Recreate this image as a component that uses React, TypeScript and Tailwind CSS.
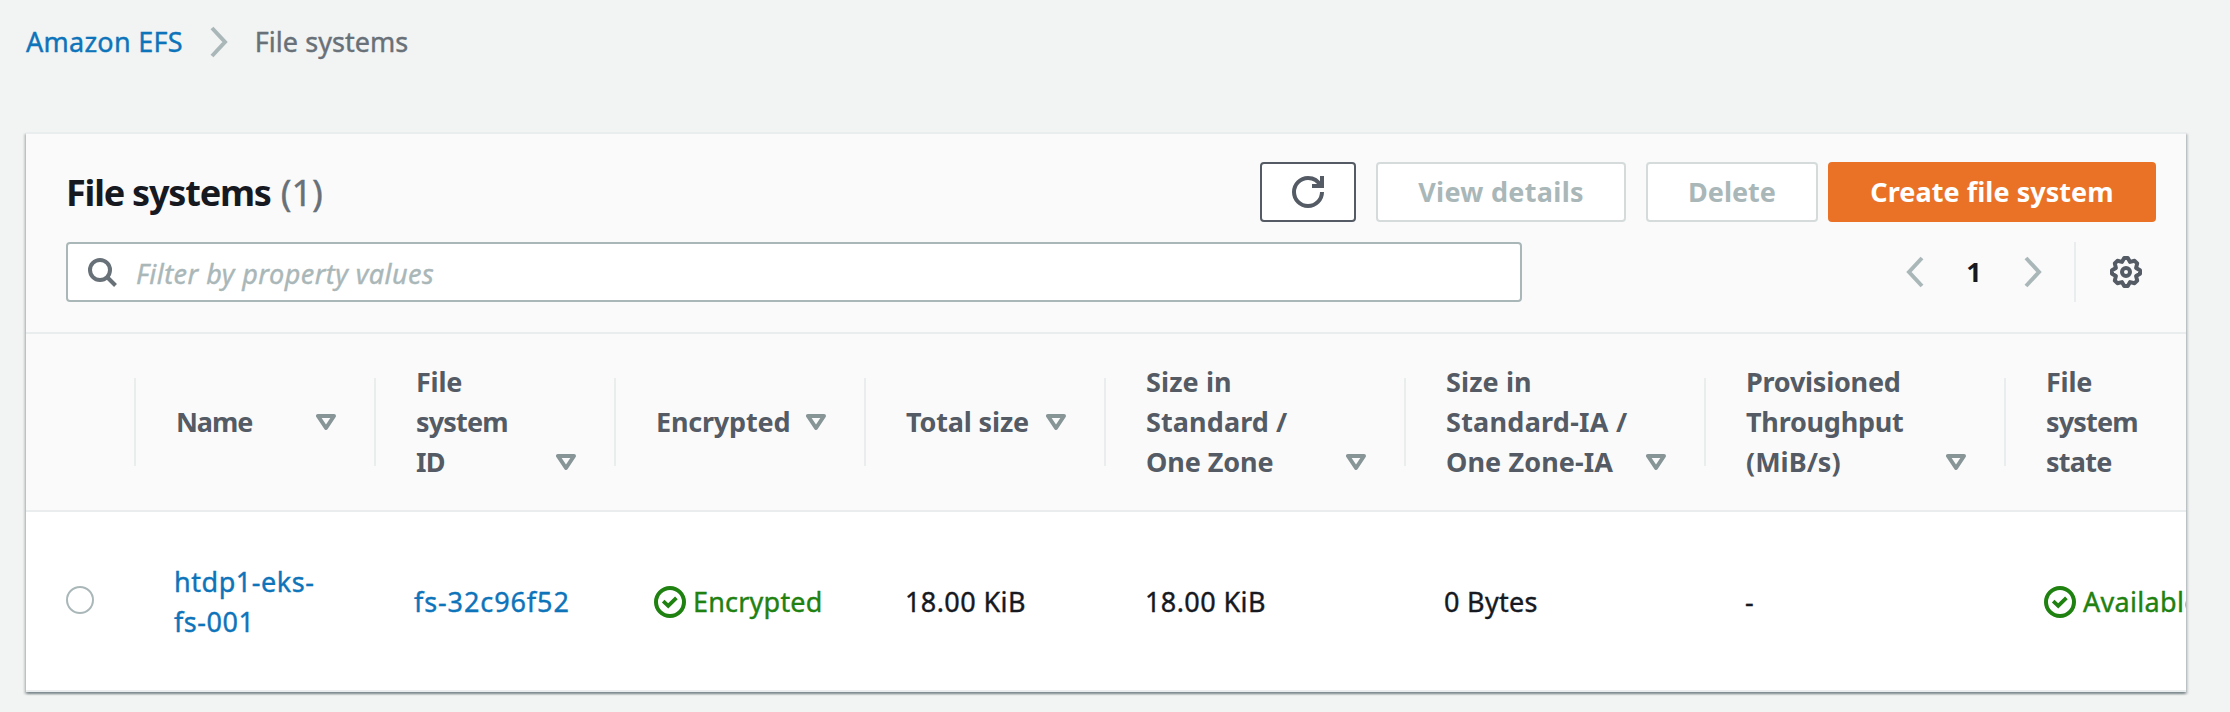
import type { ReactNode } from "react";

function SortIcon() {
  return (
    <svg className="h-5 w-5 shrink-0" viewBox="0 0 20 20" fill="none" stroke="#879596" strokeWidth="4" strokeLinejoin="round">
      <path d="M2 4h16l-8 12z" />
    </svg>
  );
}

function CheckIcon() {
  return (
    <svg className="h-8 w-8 shrink-0" viewBox="0 0 16 16" fill="none" stroke="#1f8110" strokeWidth="2">
      <circle cx="8" cy="8" r="7" />
      <path d="M4.6 7.6l2.5 2.3 4.1-4" strokeWidth="1.9" />
    </svg>
  );
}

function RefreshIcon() {
  return (
    <svg className="h-8 w-8" viewBox="0 0 16 16" fill="none" stroke="#545b64" strokeWidth="2">
      <path d="M15 8c0 3.87-3.13 7-7 7s-7-3.13-7-7 3.13-7 7-7c2.79 0 5.2 1.63 6.33 4" />
      <path d="M10 5h5V0" />
    </svg>
  );
}

function SearchIcon() {
  return (
    <svg className="h-8 w-8 shrink-0" viewBox="0 0 32 32" fill="none" stroke="#687078" strokeWidth="4">
      <circle cx="14" cy="14" r="10" />
      <path d="M21 21l8.5 8.5" />
    </svg>
  );
}

function Chevron({ left, className }: { left?: boolean; className?: string }) {
  return (
    <svg className={className} viewBox="0 0 20 32" fill="none" stroke="#aab7b8" strokeWidth="4">
      <path d={left ? "M17 2L4 16l13 14" : "M3 2l13 14L3 30"} />
    </svg>
  );
}

function GearIcon() {
  return (
    <svg className="h-8 w-8" viewBox="0 0 16 16" fill="none" stroke="#545b64" strokeWidth="2" strokeLinejoin="round">
      <path d="M7.1 1h1.8l1.14 1.95L12.3 2.4l1.3 1.3-.55 2.26L15 7.1v1.8l-1.95 1.14.55 2.26-1.3 1.3-2.26-.55L8.9 15H7.1l-1.14-1.95-2.26.55-1.3-1.3.55-2.26L1 8.9V7.1l1.95-1.14L2.4 3.7l1.3-1.3 2.26.55z" />
      <circle cx="8" cy="8" r="2" />
    </svg>
  );
}

function HeaderCell({ width, lines, last }: { width: string; lines: { text: string; tracking: string }[]; last?: boolean }) {
  return (
    <div className={`flex shrink-0 items-center ${width}`}>
      <div className="h-[88px] w-0.5 shrink-0 bg-[#eaeded]" />
      <div className="flex grow items-end justify-between pl-10 pr-[38px]">
        <div className="whitespace-nowrap font-bold text-[#545b64] [-webkit-text-stroke:0]">
          {lines.map((line) => (
            <div key={line.text} className={line.tracking}>{line.text}</div>
          ))}
        </div>
        {!last && (
          <div className="flex h-10 items-center">
            <SortIcon />
          </div>
        )}
      </div>
    </div>
  );
}

function Cell({ width, children }: { width: string; children: ReactNode }) {
  return <div className={`flex shrink-0 items-center whitespace-nowrap pl-10 ${width}`}>{children}</div>;
}

export default function App() {
  return (
    <div className="flex h-[712px] w-[2230px] flex-col overflow-hidden bg-[#f2f3f3] font-['Noto_Sans',sans-serif] text-[27px] leading-10 text-[#16191f] [-webkit-text-stroke:0.4px]">
      <nav className="flex h-[132px] items-start pl-[26px] pt-[22px]">
        <a className="tracking-[0.25px] text-[#0e74ba]">Amazon EFS</a>
        <Chevron className="ml-[26px] mt-1 h-8 w-5" />
        <span className="ml-[26px] tracking-[0.05px] text-[#687078]">File systems</span>
      </nav>

      <main className="ml-[26px] flex h-[560px] w-[2160px] flex-col overflow-hidden border-y-2 border-[#eaeded] bg-white shadow-[0_2px_2px_0_rgba(0,28,36,0.3),2px_2px_2px_0_rgba(0,28,36,0.15),-2px_2px_2px_0_rgba(0,28,36,0.15)]">
        <header className="flex h-[200px] shrink-0 flex-col border-b-2 border-[#eaeded] bg-[#fafafa] pl-10 pr-[30px] pt-7">
          <div className="flex h-[60px] items-center">
            <h1 className="flex grow pt-0.5 text-[36px]">
              <span className="font-bold tracking-[-1.2px] [-webkit-text-stroke:0]">File systems</span>
              <span className="ml-[10px] text-[#687078]">(1)</span>
            </h1>
            <button className="flex h-[60px] w-24 items-center justify-center rounded-[4px] border-2 border-[#545b64] bg-white">
              <RefreshIcon />
            </button>
            <button className="ml-5 h-[60px] w-[250px] rounded-[4px] border-2 border-[#d5dbdb] bg-white font-bold tracking-[0.3px] text-[#aab7b8] [-webkit-text-stroke:0]">View details</button>
            <button className="ml-5 h-[60px] w-[172px] rounded-[4px] border-2 border-[#d5dbdb] bg-white font-bold tracking-[0px] text-[#aab7b8] [-webkit-text-stroke:0]">Delete</button>
            <button className="ml-2.5 h-[60px] w-[328px] rounded-[4px] bg-[#ea7226] font-bold tracking-[0.05px] text-white [-webkit-text-stroke:0]">Create file system</button>
          </div>
          <div className="mt-5 flex h-[60px] items-center">
            <div className="flex h-[60px] w-[1456px] items-center rounded-[4px] border-2 border-[#aab7b8] bg-white pl-[18px]">
              <SearchIcon />
              <span className="ml-[18px] pt-[3px] italic tracking-[0.45px] text-[#aab7b8]">Filter by property values</span>
            </div>
            <div className="flex h-[60px] grow items-center justify-end">
              <Chevron left className="h-8 w-5" />
              <span className="w-[98px] text-center font-bold [-webkit-text-stroke:0]">1</span>
              <Chevron className="h-8 w-5" />
              <div className="ml-[31px] h-[60px] w-0.5 bg-[#eaeded]" />
              <div className="ml-[34px] mr-[14px]">
                <GearIcon />
              </div>
            </div>
          </div>
        </header>

        <div className="flex h-[178px] shrink-0 items-center border-b-2 border-[#eaeded] bg-[#fafafa] pl-[108px]">
          <HeaderCell width="w-[240px]" lines={[{ text: "Name", tracking: "tracking-[-1.1px]" }]} />
          <HeaderCell
            width="w-[240px]"
            lines={[
              { text: "File", tracking: "tracking-[-0.2px]" },
              { text: "system", tracking: "tracking-[-0.8px]" },
              { text: "ID", tracking: "tracking-[-0.8px]" },
            ]}
          />
          <HeaderCell width="w-[250px]" lines={[{ text: "Encrypted", tracking: "tracking-[-0.2px]" }]} />
          <HeaderCell width="w-[240px]" lines={[{ text: "Total size", tracking: "tracking-[-0.15px]" }]} />
          <HeaderCell
            width="w-[300px]"
            lines={[
              { text: "Size in", tracking: "tracking-[0.1px]" },
              { text: "Standard /", tracking: "tracking-[0.1px]" },
              { text: "One Zone", tracking: "tracking-[-0.1px]" },
            ]}
          />
          <HeaderCell
            width="w-[300px]"
            lines={[
              { text: "Size in", tracking: "tracking-[0.1px]" },
              { text: "Standard-IA /", tracking: "tracking-[0.25px]" },
              { text: "One Zone-IA", tracking: "tracking-[0.1px]" },
            ]}
          />
          <HeaderCell
            width="w-[300px]"
            lines={[
              { text: "Provisioned", tracking: "tracking-[-0.25px]" },
              { text: "Throughput", tracking: "tracking-[-0.25px]" },
              { text: "(MiB/s)", tracking: "tracking-[0px]" },
            ]}
          />
          <HeaderCell
            width="w-[240px]"
            last
            lines={[
              { text: "File", tracking: "tracking-[-0.2px]" },
              { text: "system", tracking: "tracking-[-0.8px]" },
              { text: "state", tracking: "tracking-[-0.7px]" },
            ]}
          />
        </div>

        <div className="flex h-[178px] shrink-0 items-center pt-0.5">
          <div className="flex w-[108px] shrink-0 justify-center pb-1">
            <div className="h-7 w-7 rounded-full border-2 border-[#aab7b8] bg-white" />
          </div>
          <Cell width="w-[240px]">
            <a className="tracking-[0.55px] text-[#0e74ba]">
              htdp1-eks-
              <br />
              fs-001
            </a>
          </Cell>
          <Cell width="w-[240px]">
            <a className="tracking-[0.9px] text-[#0e74ba]">fs-32c96f52</a>
          </Cell>
          <Cell width="w-[250px]">
            <CheckIcon />
            <span className="ml-[7px] tracking-[0.2px] text-[#1f8110]">Encrypted</span>
          </Cell>
          <Cell width="w-[240px]">
            <span className="pl-px tracking-[0.4px]">18.00 KiB</span>
          </Cell>
          <Cell width="w-[300px]">
            <span className="pl-px tracking-[0.4px]">18.00 KiB</span>
          </Cell>
          <Cell width="w-[300px]">
            <span className="tracking-[0.3px]">0 Bytes</span>
          </Cell>
          <Cell width="w-[300px]">
            <span className="pl-px">-</span>
          </Cell>
          <Cell width="w-[240px]">
            <CheckIcon />
            <span className="ml-[7px] tracking-[0.3px] text-[#1f8110]">Available</span>
          </Cell>
        </div>
      </main>
    </div>
  );
}
